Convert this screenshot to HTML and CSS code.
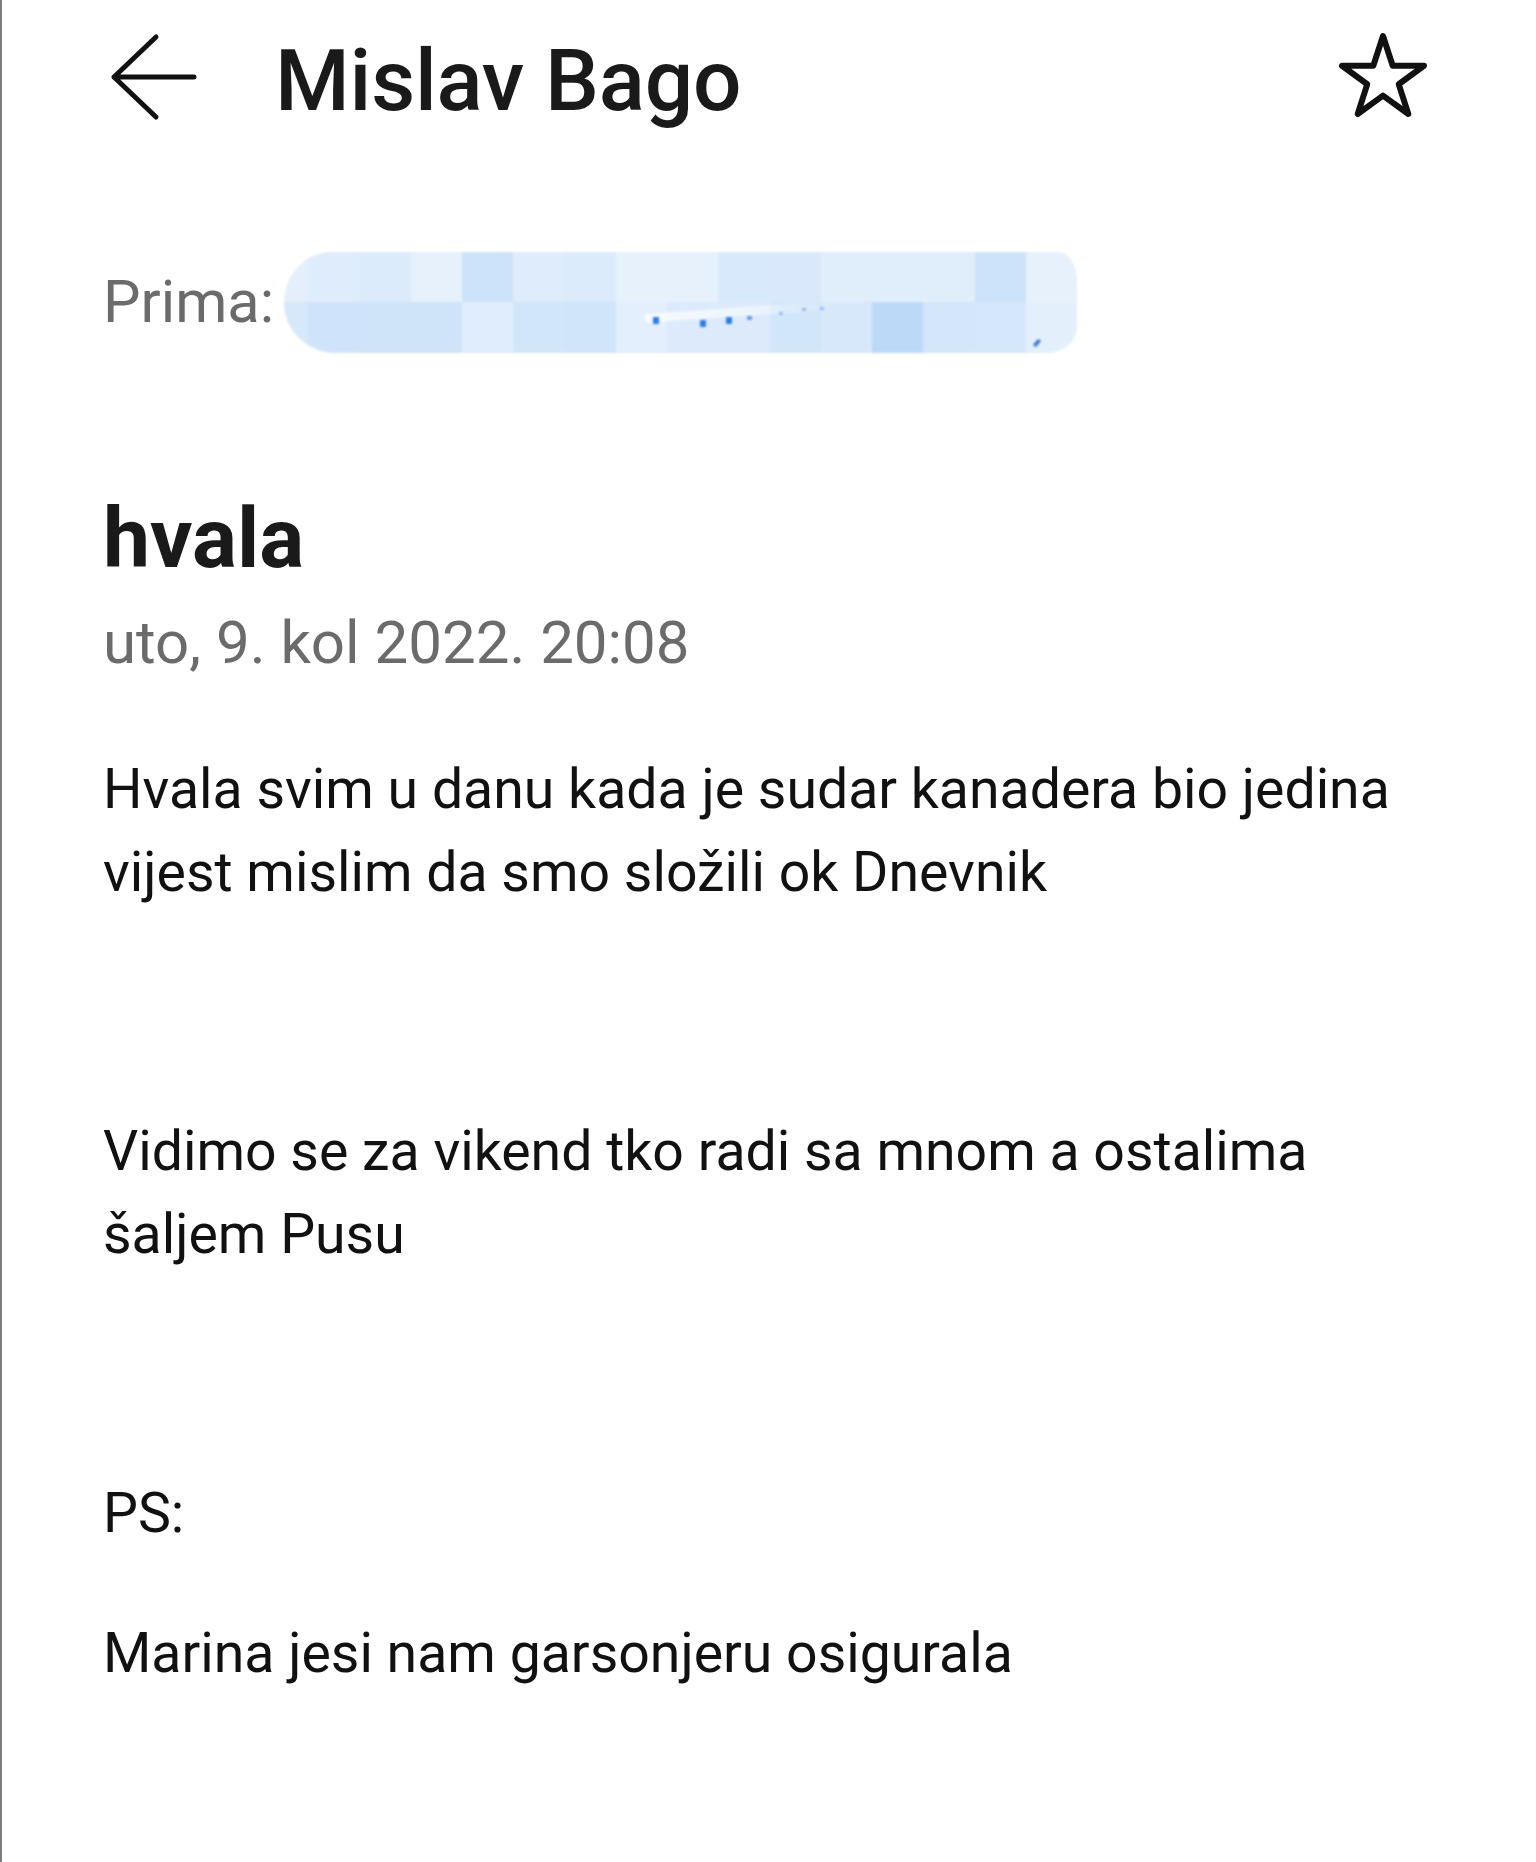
FILE: index.html
```html
<!DOCTYPE html>
<html lang="hr">
<head>
<meta charset="utf-8">
<title>hvala</title>
<link rel="stylesheet" href="styles.css">
</head>
<body>
<div class="page">
  <header class="topbar">
    <svg class="icon-back" viewBox="0 0 100 100" width="100" height="100" aria-hidden="true">
      <path d="M49 6 L7 46 L49 86 M7 46 H87" fill="none" stroke="#111" stroke-width="5" stroke-linecap="round" stroke-linejoin="round"/>
    </svg>
    <h1 class="sender">Mislav Bago</h1>
    <svg class="icon-star" viewBox="0 0 100 100" width="100" height="100" aria-hidden="true">
      <polygon points="50,5 59.7,34.8 91,34.8 65.7,53.2 75.3,83 50,64.6 24.7,83 34.3,53.2 9,34.8 40.3,34.8" fill="none" stroke="#111" stroke-width="6" stroke-linejoin="round"/>
    </svg>
  </header>

  <div class="recipient">
    <span class="recipient-label">Prima:</span>
    <div class="redact">
      <div class="redact-grid">
        <i style="background:#e4effb"></i><i style="background:#dfecfb"></i><i style="background:#dcebfb"></i><i style="background:#e6f1fc"></i><i style="background:#cde3f9"></i><i style="background:#dfecfb"></i><i style="background:#dcebfb"></i><i style="background:#e6f1fc"></i><i style="background:#e6f1fc"></i><i style="background:#d8e9fb"></i><i style="background:#d9e9fb"></i><i style="background:#e0eefc"></i><i style="background:#e0eefc"></i><i style="background:#e0eefc"></i><i style="background:#cde3f9"></i><i style="background:#e6f1fc"></i>
        <i style="background:#d6e8fa"></i><i style="background:#cfe4fa"></i><i style="background:#cfe4f9"></i><i style="background:#cfe4f9"></i><i style="background:#e0edfc"></i><i style="background:#d2e6fa"></i><i style="background:#d0e5fa"></i><i style="background:#e3effc"></i><i style="background:#dceafb"></i><i style="background:#dceafb"></i><i style="background:#d2e6fa"></i><i style="background:#d7e8fa"></i><i style="background:#bcdaf8"></i><i style="background:#d3e6fa"></i><i style="background:#d5e7fa"></i><i style="background:#e4effc"></i>
      </div>
      <span class="streak"></span>
      <span class="dot" style="left:369px;top:65px"></span>
      <span class="dot" style="left:416px;top:68px"></span>
      <span class="dot" style="left:442px;top:65px"></span>
      <span class="dot dot-s" style="left:463px;top:64px"></span>
      <span class="dot dot-xs" style="left:495px;top:60px"></span>
      <span class="dot dot-xs" style="left:518px;top:56px"></span>
      <span class="dot dot-xs" style="left:536px;top:55px"></span>
      <span class="dot dot-tilt" style="left:751px;top:87px"></span>
    </div>
  </div>

  <h2 class="subject">hvala</h2>
  <div class="date">uto, 9. kol 2022. 20:08</div>

  <div class="message">
    <p class="para">Hvala svim u danu kada je sudar kanadera bio jedina vijest mislim da smo složili ok Dnevnik</p>
    <p class="para para-gap">Vidimo se za vikend tko radi sa mnom a ostalima šaljem Pusu</p>
    <p class="para para-gap">PS:</p>
    <p class="para para-small-gap">Marina jesi nam garsonjeru osigurala</p>
  </div>
</div>
</body>
</html>
```

FILE: styles.css
```css
html, body {
  margin: 0;
  padding: 0;
  background: #ffffff;
}

body {
  font-family: Roboto, "Noto Sans", "Liberation Sans", sans-serif;
  color: #111111;
}

.page {
  box-sizing: border-box;
  width: 1536px;
  min-height: 1862px;
  border-left: 2px solid #7d7d7d;
  padding-left: 101px;
  padding-right: 103px;
}

.topbar {
  display: flex;
  align-items: center;
  height: 162px;
}

.icon-back {
  display: block;
  flex: none;
  margin-left: 4px;
}

.sender {
  flex: 1;
  margin: 0 0 0 68px;
  font-size: 85.5px;
  font-weight: 500;
  line-height: 100px;
  color: #1a1a1a;
  letter-spacing: -0.2px;
}

.icon-star {
  display: block;
  flex: none;
}

.recipient {
  display: flex;
  align-items: center;
  margin-top: 89px;
  height: 103px;
}

.recipient-label {
  font-size: 59.5px;
  line-height: 103px;
  color: #6b6b6b;
}

.redact {
  position: relative;
  margin-left: 10px;
  width: 793px;
  height: 101px;
  border-radius: 48px 18px 30px 52px / 50px 30px 26px 50px;
  overflow: hidden;
  filter: blur(1.2px);
}

.redact-grid {
  display: grid;
  grid-template-columns: 24px repeat(15, 1fr);
  grid-template-rows: 50px 51px;
  width: 100%;
  height: 100%;
}

.redact-grid i {
  display: block;
}

.streak {
  position: absolute;
  left: 360px;
  top: 62px;
  width: 190px;
  height: 9px;
  background: linear-gradient(90deg, rgba(255,255,255,0.75), rgba(255,255,255,0.45) 60%, rgba(255,255,255,0));
  transform: rotate(-4deg);
  transform-origin: left center;
  border-radius: 5px;
}

.dot {
  position: absolute;
  width: 6px;
  height: 7px;
  background: #2a7be4;
  border-radius: 1px;
}

.dot-s {
  width: 5px;
  height: 4px;
  background: #5b9be9;
}

.dot-xs {
  width: 4px;
  height: 3px;
  background: #8fbaf0;
}

.dot-tilt {
  width: 4px;
  height: 8px;
  background: #3f7fd0;
  transform: rotate(40deg);
}

.subject {
  margin: 135px 0 0 0;
  font-size: 84px;
  font-weight: 700;
  line-height: 100px;
  color: #1a1a1a;
}

.date {
  margin-top: 14px;
  font-size: 60px;
  line-height: 80px;
  color: #6b6b6b;
}

.message {
  margin-top: 65px;
}

.para {
  margin: 0;
  font-size: 55.4px;
  line-height: 83px;
  color: #111111;
}

.para-gap {
  margin-top: 196px;
}

.para-small-gap {
  margin-top: 57px;
}
```
